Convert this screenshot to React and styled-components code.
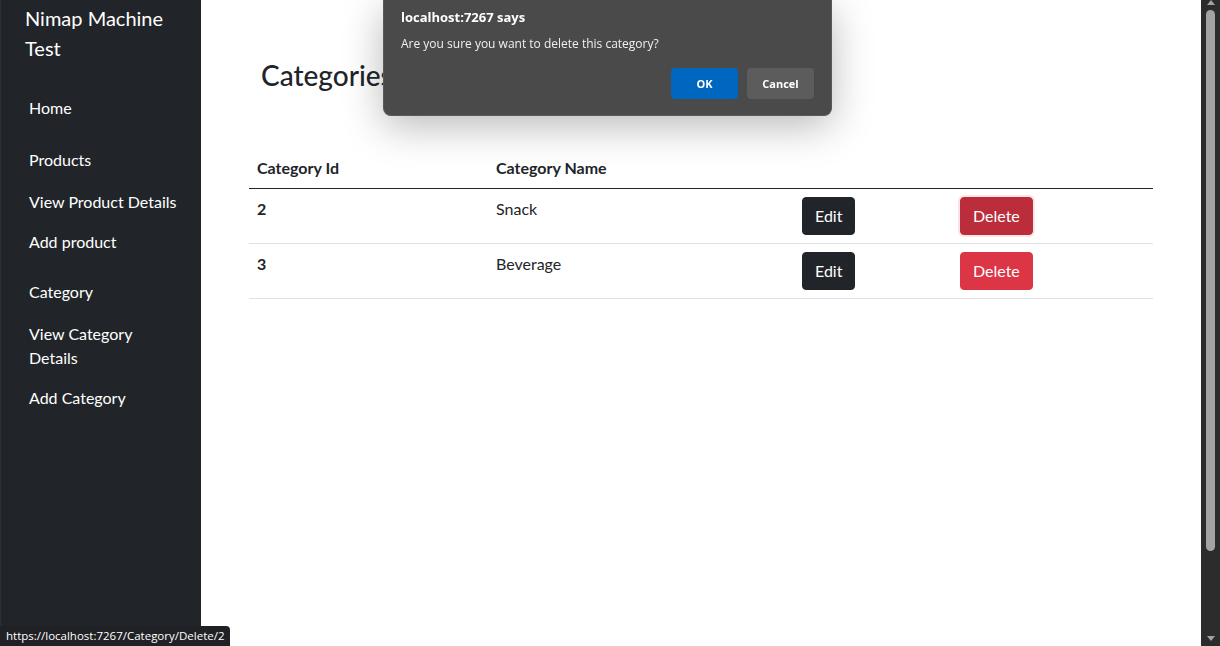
import React from 'react';
import styled, { createGlobalStyle } from 'styled-components';

const GlobalStyle = createGlobalStyle`
  html, body {
    margin: 0;
    padding: 0;
    height: 100%;
    overflow: hidden;
  }
  body {
    font-family: Lato, "Open Sans", sans-serif;
    color: #212529;
    background: #fff;
  }
`;

const categories = [
    { id: 2, name: 'Snack', active: true },
    { id: 3, name: 'Beverage', active: false },
];

const navItems = [
    { label: 'Home', top: 0 },
    { label: 'Products', top: 12 },
    { label: 'View Product Details', top: 2 },
    { label: 'Add product', top: 0 },
    { label: 'Category', top: 10 },
    { label: 'View Category Details', top: 2 },
    { label: 'Add Category', top: 0 },
];

const App = () => {
    return (
        <Page>
            <GlobalStyle />
            <Sidebar>
                <Brand>Nimap Machine Test</Brand>
                <Nav>
                    {navItems.map((item) => (
                        <NavItem key={item.label} $top={item.top}>
                            {item.label}
                        </NavItem>
                    ))}
                </Nav>
            </Sidebar>
            <Main>
                <Heading>Categories</Heading>
                <Table>
                    <colgroup>
                        <col style={{ width: 239 }} />
                        <col style={{ width: 306 }} />
                        <col style={{ width: 158 }} />
                        <col />
                    </colgroup>
                    <thead>
                        <tr>
                            <Th>Category Id</Th>
                            <Th>Category Name</Th>
                            <Th></Th>
                            <Th></Th>
                        </tr>
                    </thead>
                    <tbody>
                        {categories.map((c) => (
                            <tr key={c.id}>
                                <IdCell>{c.id}</IdCell>
                                <Td>{c.name}</Td>
                                <Td>
                                    <Button $variant="dark">Edit</Button>
                                </Td>
                                <Td>
                                    <Button $variant={c.active ? 'dangerActive' : 'danger'}>
                                        Delete
                                    </Button>
                                </Td>
                            </tr>
                        ))}
                    </tbody>
                </Table>
            </Main>
            <Scrollbar>
                <Arrow $dir="up" />
                <Track>
                    <Thumb />
                </Track>
                <Arrow $dir="down" />
            </Scrollbar>

            <Dialog>
                <DialogTitle>localhost:7267 says</DialogTitle>
                <DialogMessage>Are you sure you want to delete this category?</DialogMessage>
                <DialogActions>
                    <DialogButton $primary>OK</DialogButton>
                    <DialogButton>Cancel</DialogButton>
                </DialogActions>
            </Dialog>

            <StatusBar>https://localhost:7267/Category/Delete/2</StatusBar>
        </Page>
    );
};

const Page = styled.div`
  display: flex;
  width: 1220px;
  height: 646px;
  overflow: hidden;
`;

const Sidebar = styled.aside`
  width: 200px;
  flex-shrink: 0;
  background-color: #212529;
  border-left: 1px solid #2c3036;
  color: #fff;
  display: flex;
  flex-direction: column;
`;

const Brand = styled.div`
  padding: 3px 24px 0 24px;
  font-size: 20px;
  line-height: 30px;
  color: #fff;
`;

const Nav = styled.ul`
  list-style: none;
  margin: 0;
  padding: 25px 0 0 28px;
  width: 150px;
`;

const NavItem = styled.li`
  margin-top: ${(props) => props.$top}px;
  padding: 8px 0;
  font-size: 16px;
  line-height: 24px;
  color: #fff;
  cursor: pointer;
`;

const Main = styled.main`
  flex: 1;
  padding: 48px 48px 0 48px;
  background: #fff;
`;

const Heading = styled.h3`
  margin: 10px 0 57px 12px;
  font-size: 28px;
  font-weight: 500;
  line-height: 34px;
  color: #212529;
`;

const Table = styled.table`
  width: 904px;
  table-layout: fixed;
  border-collapse: collapse;
  font-size: 16px;
  line-height: 24px;
`;

const Th = styled.th`
  text-align: left;
  font-weight: 700;
  padding: 7px 8px 8px 8px;
  border-bottom: 1px solid #212529;
`;

const Td = styled.td`
  padding: 8px;
  vertical-align: top;
  border-bottom: 1px solid #dee2e6;
`;

const IdCell = styled(Td)`
  font-weight: 700;
`;

const buttonColors = {
    dark: { bg: '#212529', ring: 'none' },
    danger: { bg: '#dc3545', ring: 'none' },
    dangerActive: { bg: '#bb2d3b', ring: '0 0 0 2px rgba(225, 83, 97, 0.15)' },
};

const Button = styled.button`
  font-family: inherit;
  font-size: 16px;
  line-height: 24px;
  padding: 6px 12px;
  border: 1px solid ${(props) => buttonColors[props.$variant].bg};
  border-radius: 4px;
  color: #fff;
  background-color: ${(props) => buttonColors[props.$variant].bg};
  box-shadow: ${(props) => buttonColors[props.$variant].ring};
  cursor: pointer;
`;

const Scrollbar = styled.div`
  width: 19px;
  flex-shrink: 0;
  background: #2c2c2c;
  display: flex;
  flex-direction: column;
  align-items: center;
`;

const Arrow = styled.div`
  width: 0;
  height: 0;
  margin: ${(props) => (props.$dir === 'up' ? '0 0 4px' : '4px 0 5px')};
  border-left: 4px solid transparent;
  border-right: 4px solid transparent;
  ${(props) =>
        props.$dir === 'up'
            ? 'border-bottom: 5px solid #a3a3a3;'
            : 'border-top: 5px solid #a3a3a3;'}
`;

const Track = styled.div`
  flex: 1;
  width: 100%;
  display: flex;
  justify-content: center;
  padding-top: 1px;
`;

const Thumb = styled.div`
  width: 9px;
  height: 541px;
  border-radius: 5px;
  background: #a3a3a3;
`;

const Dialog = styled.div`
  position: fixed;
  top: 0;
  left: 383px;
  width: 449px;
  height: 116px;
  box-sizing: border-box;
  padding: 8px 17px 0 17px;
  background: #4a4a4a;
  border: 1px solid #5a5a5a;
  border-top: none;
  border-radius: 0 0 8px 8px;
  box-shadow: 0 10px 40px rgba(0, 0, 0, 0.28);
  font-family: "Open Sans", "Noto Sans", sans-serif;
  color: #fff;
  display: flex;
  flex-direction: column;
`;

const DialogTitle = styled.div`
  font-size: 13px;
  font-weight: 700;
  line-height: 18px;
`;

const DialogMessage = styled.div`
  margin-top: 10px;
  font-size: 12px;
  line-height: 16px;
  color: #f0f0f0;
`;

const DialogActions = styled.div`
  margin-top: 16px;
  display: flex;
  justify-content: flex-end;
  gap: 9px;
`;

const DialogButton = styled.button`
  width: 67px;
  height: 31px;
  border: none;
  border-radius: 4px;
  font-family: inherit;
  font-size: 11px;
  font-weight: 700;
  color: #fff;
  background: ${(props) => (props.$primary ? '#0067c0' : '#5c5c5c')};
  cursor: pointer;
`;

const StatusBar = styled.div`
  position: fixed;
  left: 0;
  bottom: 0;
  width: 230px;
  height: 20px;
  box-sizing: border-box;
  padding: 0 0 0 6px;
  background: #202124;
  border-top-right-radius: 4px;
  color: #fff;
  font-family: "Open Sans", "Noto Sans", sans-serif;
  font-size: 11.5px;
  line-height: 20px;
  white-space: nowrap;
`;

export default App;
